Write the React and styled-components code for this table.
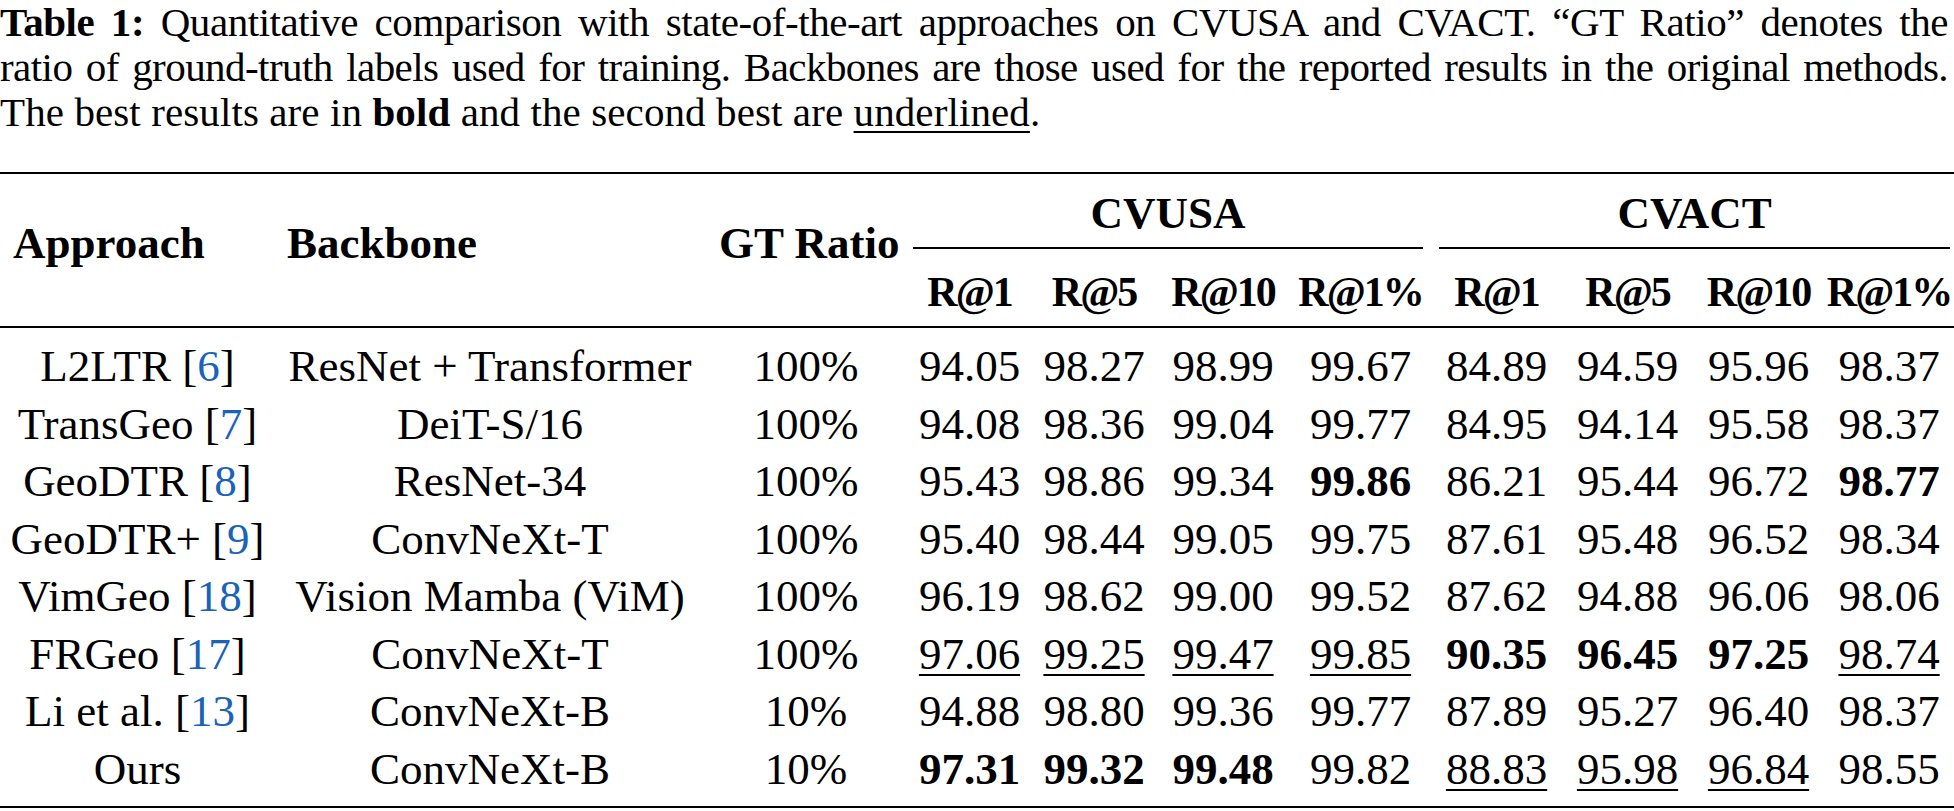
import React from 'react';
import styled, { createGlobalStyle } from 'styled-components';

const GlobalStyle = createGlobalStyle`
  html, body {
    margin: 0;
    padding: 0;
    background: #fff;
  }
  body {
    font-family: 'Liberation Serif', 'Times New Roman', serif;
    color: #000;
  }
`;

const COLS = [275, 430, 202, 125, 124, 134, 141, 131, 131, 131, 130];

const METRICS = ['R@1', 'R@5', 'R@10', 'R@1%'];

const ROWS = [
  {
    name: 'L2LTR',
    cite: 6,
    backbone: 'ResNet + Transformer',
    gt: '100%',
    vals: ['94.05', '98.27', '98.99', '99.67', '84.89', '94.59', '95.96', '98.37'],
  },
  {
    name: 'TransGeo',
    cite: 7,
    backbone: 'DeiT-S/16',
    gt: '100%',
    vals: ['94.08', '98.36', '99.04', '99.77', '84.95', '94.14', '95.58', '98.37'],
  },
  {
    name: 'GeoDTR',
    cite: 8,
    backbone: 'ResNet-34',
    gt: '100%',
    vals: ['95.43', '98.86', '99.34', '99.86', '86.21', '95.44', '96.72', '98.77'],
    best: [3, 7],
  },
  {
    name: 'GeoDTR+',
    cite: 9,
    backbone: 'ConvNeXt-T',
    gt: '100%',
    vals: ['95.40', '98.44', '99.05', '99.75', '87.61', '95.48', '96.52', '98.34'],
  },
  {
    name: 'VimGeo',
    cite: 18,
    backbone: 'Vision Mamba (ViM)',
    gt: '100%',
    vals: ['96.19', '98.62', '99.00', '99.52', '87.62', '94.88', '96.06', '98.06'],
  },
  {
    name: 'FRGeo',
    cite: 17,
    backbone: 'ConvNeXt-T',
    gt: '100%',
    vals: ['97.06', '99.25', '99.47', '99.85', '90.35', '96.45', '97.25', '98.74'],
    best: [4, 5, 6],
    second: [0, 1, 2, 3, 7],
  },
  {
    name: 'Li et al.',
    cite: 13,
    backbone: 'ConvNeXt-B',
    gt: '10%',
    vals: ['94.88', '98.80', '99.36', '99.77', '87.89', '95.27', '96.40', '98.37'],
  },
  {
    name: 'Ours',
    backbone: 'ConvNeXt-B',
    gt: '10%',
    vals: ['97.31', '99.32', '99.48', '99.82', '88.83', '95.98', '96.84', '98.55'],
    best: [0, 1, 2],
    second: [4, 5, 6],
  },
];

const App = () => {
  return (
    <Page>
      <GlobalStyle />
      <Caption>
        <CaptionLine $justify $spacing={-0.45}>
          <b>Table 1:</b> Quantitative comparison with state-of-the-art approaches on CVUSA and
          CVACT. “GT Ratio” denotes the
        </CaptionLine>
        <CaptionLine $justify $spacing={-0.55} $words={-3}>
          ratio of ground-truth labels used for training. Backbones are those used for the reported
          results in the original methods.
        </CaptionLine>
        <CaptionLine $spacing={0.1}>
          The best results are in <b>bold</b> and the second best are <U>underlined</U>.
        </CaptionLine>
      </Caption>

      <Table>
        <colgroup>
          {COLS.map((w, i) => (
            <col key={i} style={{ width: w }} />
          ))}
        </colgroup>
        <thead>
          <tr>
            <MultiTh rowSpan={2} $pad={13}>Approach</MultiTh>
            <MultiTh rowSpan={2} $pad={12}>Backbone</MultiTh>
            <MultiTh rowSpan={2} $pad={14}>GT Ratio</MultiTh>
            <GroupTh colSpan={4}>
              <GroupLabel $trimL={6} $trimR={8}>CVUSA</GroupLabel>
            </GroupTh>
            <GroupTh colSpan={4}>
              <GroupLabel $trimL={8} $trimR={4}>CVACT</GroupLabel>
            </GroupTh>
          </tr>
          <tr>
            {[...METRICS, ...METRICS].map((m, i) => (
              <MetricTh key={i}>{m}</MetricTh>
            ))}
          </tr>
        </thead>
        <tbody>
          {ROWS.map((r) => (
            <DataRow key={r.name}>
              <Td>
                {r.name}
                {r.cite && (
                  <>
                    {' '}[<Cite>{r.cite}</Cite>]
                  </>
                )}
              </Td>
              <Td>{r.backbone}</Td>
              <Td>{r.gt}</Td>
              {r.vals.map((v, i) => {
                const isBest = r.best && r.best.includes(i);
                const isSecond = r.second && r.second.includes(i);
                return (
                  <Td key={i} $bold={isBest}>
                    {isSecond ? <U>{v}</U> : v}
                  </Td>
                );
              })}
            </DataRow>
          ))}
        </tbody>
      </Table>
    </Page>
  );
};

const Page = styled.div`
  width: 1954px;
`;

const Caption = styled.div`
  font-size: 41px;
  line-height: 45px;
  margin-bottom: 37px;
  padding-right: 6px;
`;

const CaptionLine = styled.div`
  white-space: nowrap;
  text-align: ${(p) => (p.$justify ? 'justify' : 'left')};
  text-align-last: ${(p) => (p.$justify ? 'justify' : 'auto')};
  letter-spacing: ${(p) => p.$spacing || 0}px;
  word-spacing: ${(p) => p.$words || 0}px;

  b {
    font-weight: 700;
  }
`;

const U = styled.span`
  text-decoration: underline;
  text-decoration-thickness: 2px;
  text-underline-offset: 5px;
`;

const Table = styled.table`
  width: 1954px;
  table-layout: fixed;
  border-collapse: separate;
  border-spacing: 0;
  font-size: 45px;
  line-height: 50px;
`;

const MultiTh = styled.th`
  border-top: 2px solid #000;
  border-bottom: 2px solid #000;
  text-align: left;
  vertical-align: top;
  font-weight: 700;
  white-space: nowrap;
  padding: 44px 0 0 ${(p) => p.$pad}px;
`;

const GroupTh = styled.th`
  border-top: 2px solid #000;
  padding: 0;
  font-weight: 700;
  vertical-align: top;
`;

const GroupLabel = styled.div`
  margin: 0 ${(p) => p.$trimR}px 0 ${(p) => p.$trimL}px;
  padding: 14px 0 9px;
  border-bottom: 2px solid #000;
  text-align: center;
`;

const MetricTh = styled.th`
  border-bottom: 2px solid #000;
  font-size: 42px;
  font-weight: 700;
  letter-spacing: -2px;
  text-align: center;
  white-space: nowrap;
  padding: 18px 0 9px;
`;

const DataRow = styled.tr`
  &:first-child td {
    padding-top: 10px;
  }
  &:last-child td {
    padding-bottom: 8px;
    border-bottom: 2px solid #000;
  }
`;

const Td = styled.td`
  height: 57.5px;
  line-height: 57.5px;
  padding: 0;
  text-align: center;
  white-space: nowrap;
  font-weight: ${(p) => (p.$bold ? 700 : 400)};
`;

const Cite = styled.span`
  color: #1a63b8;
`;

export default App;
